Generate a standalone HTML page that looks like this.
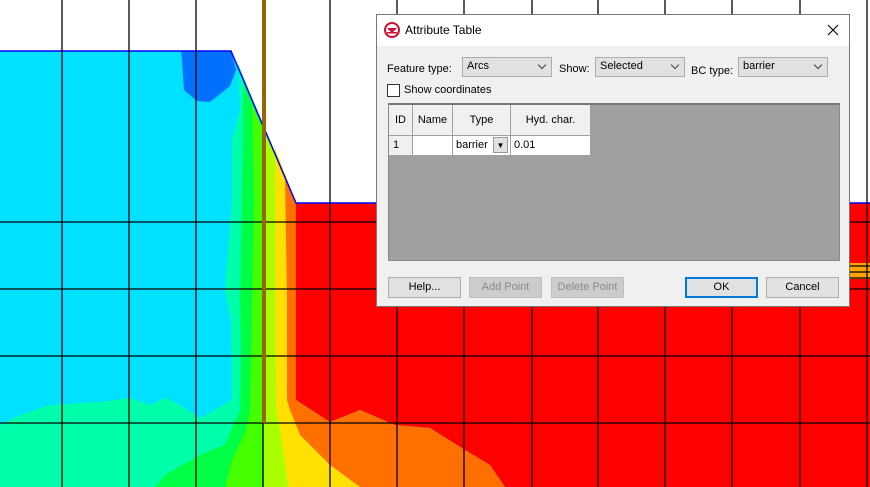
<!DOCTYPE html><html><head><style>
body{margin:0;width:870px;height:487px;overflow:hidden;background:#fff;font-family:"Liberation Sans",sans-serif;font-size:11px;color:#000}
.dlg{position:absolute;left:376px;top:14px;width:474px;height:293px;background:#f0f0f0;border:1px solid #777;box-sizing:border-box}
.tb{height:31px;background:#fff;position:relative}
.abs{position:absolute}
.cb{position:absolute;height:20px;background:#e1e1e1;border:1px solid #adadad;box-sizing:border-box;padding:2px 4px;font-size:11px}
.cb:after{content:"";position:absolute;right:6px;top:4px;width:5px;height:5px;border-right:1px solid #444;border-bottom:1px solid #444;transform:rotate(45deg)}
.btn{position:absolute;top:262px;height:21px;background:#e1e1e1;border:1px solid #adadad;box-sizing:border-box;text-align:center;line-height:19px}
.dis{color:#8a8a8a;background:#ccc;border-color:#bfbfbf}
.grid{position:absolute;left:11px;top:88px;width:452px;height:158px;background:#a0a0a0;border:1px solid #888;border-top:2px solid #777;box-sizing:border-box}
.c{position:absolute;background:#fff;border-right:1px solid #a0a0a0;border-bottom:1px solid #a0a0a0;box-sizing:border-box;text-align:center}
</style></head><body>
<svg width="870" height="487" style="position:absolute;left:0;top:0">
<rect x="0" y="0" width="870" height="487" fill="#fff"/>
<polygon points="0,51 231,51 296,203 870,203 870,487 0,487" fill="#00e0ff"/>
<polygon points="181,51 231,51 236,70 230,86 210,102 197,101 184,90 182,60" fill="#0070ff"/>
<polygon points="238,64 296,203 296,487 150,487 200,445 232,410 231,320 225,290 232,200 232,140 240,110" fill="#00ffaa"/>
<polygon points="0,425 20,415 50,405 100,402 130,398 150,405 165,398 175,402 200,418 215,410 232,400 232,487 0,487" fill="#00ffaa"/>
<polygon points="244,84 296,203 296,487 155,487 165,475 200,455 225,445 240,410 241,350 240,300 242,200 243,130" fill="#00ff44"/>
<polygon points="252,105 296,203 296,487 225,487 232,460 246,430 250,410 252,300 254,200" fill="#44ff00"/>
<polygon points="266,130 296,203 296,487 264,487 264,130" fill="#aaff00"/>
<polygon points="275,148 296,203 296,487 290,487 285,460 280,430 276,410 275,300" fill="#ffe000"/>
<polygon points="285,175 296,203 296,400 290,410 287,400 287,300" fill="#ff7000"/>
<polygon points="296,203 870,203 870,487 505,487 490,465 465,450 430,428 395,425 360,410 330,422 296,400" fill="#f00"/>
<polygon points="296,400 330,422 360,410 395,425 430,428 465,450 490,465 505,487 360,487 330,465 300,435 290,410" fill="#ff7000"/>
<polygon points="290,410 300,435 330,465 360,487 288,487 282,440" fill="#ffe000"/>
<polyline points="0,51 231,51 296,203 870,203" fill="none" stroke="#0000ff" stroke-width="1.5"/>
<rect x="850" y="263" width="20" height="16" fill="#ffa500"/>
<g stroke="#000" stroke-width="1.3">
<line x1="62" y1="0" x2="62" y2="487"/><line x1="129" y1="0" x2="129" y2="487"/><line x1="196" y1="0" x2="196" y2="487"/>
<line x1="263" y1="0" x2="263" y2="487"/><line x1="330" y1="0" x2="330" y2="487"/><line x1="397" y1="0" x2="397" y2="487"/>
<line x1="464" y1="0" x2="464" y2="487"/><line x1="532" y1="0" x2="532" y2="487"/><line x1="598" y1="0" x2="598" y2="487"/>
<line x1="665" y1="0" x2="665" y2="487"/><line x1="732" y1="0" x2="732" y2="487"/><line x1="800" y1="0" x2="800" y2="487"/><line x1="867" y1="0" x2="867" y2="487"/>
<line x1="0" y1="222" x2="870" y2="222"/><line x1="0" y1="289" x2="870" y2="289"/><line x1="0" y1="356" x2="870" y2="356"/><line x1="0" y1="423" x2="870" y2="423"/>
<line x1="850" y1="266" x2="870" y2="266"/><line x1="850" y1="272" x2="870" y2="272"/><line x1="850" y1="278" x2="870" y2="278"/>
</g>
<rect x="262" y="0" width="4" height="423" fill="#9a6400"/>
</svg>
<div class="dlg">
<div class="tb">
<svg class="abs" style="left:7px;top:7px" width="16" height="16"><circle cx="8" cy="8" r="7" fill="none" stroke="#c8102e" stroke-width="2"/><path d="M3 6h10l-5 5z" fill="#c8102e"/><rect x="3" y="10" width="10" height="1.5" fill="#c8102e"/></svg>
<div class="abs" style="left:28px;top:8px;font-size:12px">Attribute Table</div>
<svg class="abs" style="right:10px;top:9px" width="12" height="12"><path d="M1 1L11 11M11 1L1 11" stroke="#000" stroke-width="1.1"/></svg>
</div>
<div class="abs" style="left:10px;top:48px">Feature type:</div>
<div class="cb" style="left:85px;top:42px;width:90px">Arcs</div>
<div class="abs" style="left:182px;top:48px">Show:</div>
<div class="cb" style="left:218px;top:42px;width:90px">Selected</div>
<div class="abs" style="left:314px;top:50px">BC type:</div>
<div class="cb" style="left:361px;top:42px;width:90px">barrier</div>
<div class="abs" style="left:10px;top:69px;width:11px;height:11px;border:1px solid #333;background:#fff"></div>
<div class="abs" style="left:27px;top:69px">Show coordinates</div>
<div class="grid">
<div class="c" style="left:0;top:0;width:24px;height:31px;line-height:30px;background:#f0f0f0">ID</div>
<div class="c" style="left:24px;top:0;width:40px;height:31px;line-height:30px;background:#f0f0f0">Name</div>
<div class="c" style="left:64px;top:0;width:58px;height:31px;line-height:30px;background:#f0f0f0">Type</div>
<div class="c" style="left:122px;top:0;width:80px;height:31px;line-height:30px;background:#f0f0f0">Hyd. char.</div>
<div class="c" style="left:0;top:31px;width:24px;height:20px;line-height:19px;text-align:left;padding-left:4px;background:#f0f0f0">1</div>
<div class="c" style="left:24px;top:31px;width:40px;height:20px"></div>
<div class="c" style="left:64px;top:31px;width:58px;height:20px;line-height:19px;text-align:left;padding-left:3px;font-size:11px">barrier<span style="position:absolute;right:2px;top:1px;width:15px;height:16px;background:#e1e1e1;border:1px solid #999;box-sizing:border-box;font-size:8px;line-height:15px;text-align:center">▼</span></div>
<div class="c" style="left:122px;top:31px;width:80px;height:20px;line-height:19px;text-align:left;padding-left:3px">0.01</div>
</div>
<div class="btn" style="left:11px;width:73px">Help...</div>
<div class="btn dis" style="left:92px;width:73px">Add Point</div>
<div class="btn dis" style="left:174px;width:73px">Delete Point</div>
<div class="btn" style="left:308px;width:73px;border:2px solid #0078d7;line-height:17px">OK</div>
<div class="btn" style="left:389px;width:73px">Cancel</div>
</div>
</body></html>
